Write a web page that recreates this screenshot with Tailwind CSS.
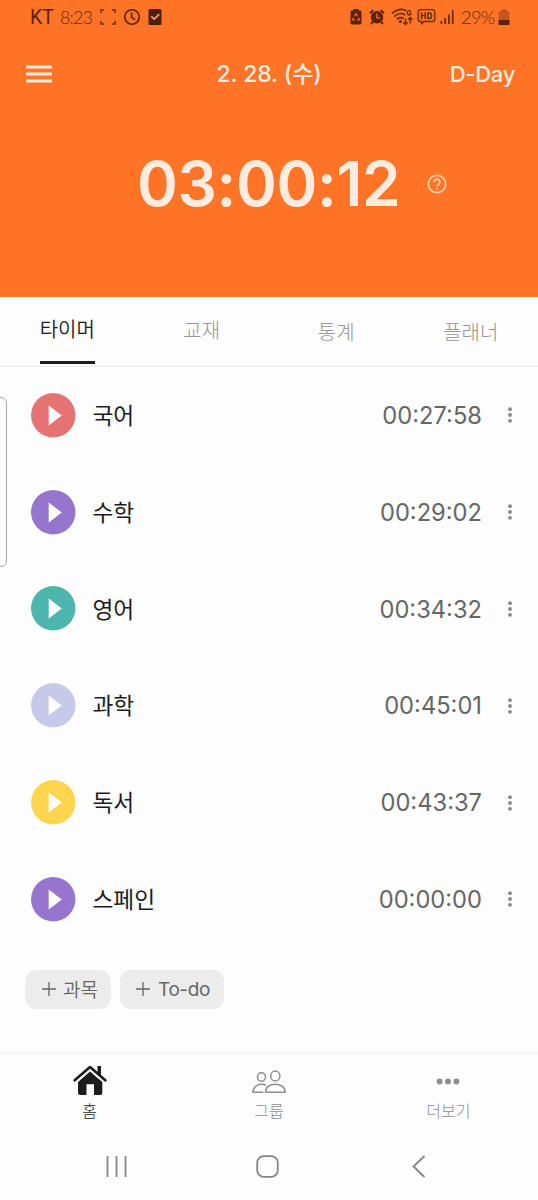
<!DOCTYPE html>
<html lang="ko">
<head>
    <meta charset="UTF-8">
    <meta name="viewport" content="width=device-width, initial-scale=1.0">
    <title>타이머</title>
    <script src="https://cdn.jsdelivr.net/npm/@tailwindcss/browser@4"></script>
</head>
<body class="bg-[#fdfdfd] font-['Inter','Noto_Sans_CJK_KR',sans-serif]">
    <div class="relative flex flex-col w-[538px] h-[1200px] overflow-hidden">

        <!-- Header -->
        <header class="h-[297px] shrink-0 bg-[#ff7426] text-[#ffece0]">
            <!-- Status bar -->
            <div class="flex items-center h-[34px] pl-[30px] pr-[28px] text-[#6b2a0a]">
                <span class="w-[30px] pt-[2px] text-[19.5px] leading-none font-['Roboto',sans-serif] text-[#5a230a] whitespace-nowrap">KT</span>
                <span class="w-[40px] text-[18px] leading-none font-light font-['Lato',sans-serif] whitespace-nowrap tracking-[-0.9px]">8:23</span>
                <svg class="w-4 h-4" viewBox="0 0 16 16" fill="none" stroke="currentColor" stroke-width="1.4">
                    <path d="M1 4V1h3M12 1h3v3M15 12v3h-3M4 15H1v-3"/>
                </svg>
                <svg class="ml-[7px] w-[18px] h-[18px]" viewBox="0 0 18 18" fill="none" stroke="#5a230a" stroke-width="1.6">
                    <circle cx="9" cy="9" r="7.3"/>
                    <path d="M8.6 4.5v4.8l3.6 2.3"/>
                </svg>
                <svg class="ml-[6px] w-[16px] h-[18px]" viewBox="0 0 16 18">
                    <rect x="1.5" y="1" width="13" height="16" rx="1.5" fill="#4d1f08"/>
                    <path d="M4.3 8.2l2.8 2.9 5.2-5" fill="none" stroke="#ffa469" stroke-width="1.6"/>
                </svg>

                <svg class="ml-auto w-[12px] h-[18px]" viewBox="0 0 12 18">
                    <path d="M3.5 1h5v1.6H10a1.5 1.5 0 0 1 1.5 1.5V15a1.5 1.5 0 0 1-1.5 1.5H2A1.5 1.5 0 0 1 .5 15V4.1a1.5 1.5 0 0 1 1.5-1.5h1.5z" fill="#5a230a"/>
                    <path d="M4.4 8.3L6 5.8l1.6 2.5M8.6 9.7l.9 2.3H7M5 12H2.6l.9-2.3" fill="none" stroke="#ff7426" stroke-width="1.2"/>
                </svg>
                <svg class="ml-[7px] w-[16px] h-[18px]" viewBox="0 0 16 18" fill="none" stroke="#5a230a">
                    <circle cx="8" cy="9.3" r="6.2" fill="#5a230a" stroke="none"/>
                    <path d="M1 5.2l3.3-2.9M15 5.2l-3.3-2.9M3.8 14l-1.8 2M12.2 14l1.8 2" stroke-width="2"/>
                    <path d="M8 5.5v4.3h3.2" stroke="#ff7426" stroke-width="1.3"/>
                </svg>
                <svg class="ml-[6px] w-[23px] h-[20px]" viewBox="0 0 23 20" fill="none" stroke="currentColor" stroke-width="1.7">
                    <path d="M.8 6.7C5.5 1.8 11.500 1.5 15.500 4"/>
                    <path d="M3.3 9.5c3.2-3.3 7.7-3.5 10.9-1.5"/>
                    <path d="M5.9 12.3c2-2 4.7-2.1 6.7-.7"/>
                    <circle cx="9.3" cy="14.6" r="1.5" fill="currentColor" stroke="none"/>
                    <path d="M20 4.6c-1-1.5-3.7-1.2-3.7 1.4 0 2.5 3.4 2.7 3.7.3h-1.6" stroke-width="1.3"/>
                    <path d="M14.5 11.5v6M12.3 15.3l2.2 2.3 2.2-2.3M19.3 16.5v-6M17.1 12.8l2.2-2.3 2.2 2.3" stroke-width="1.4"/>
                </svg>
                <svg class="ml-[3px] w-[19px] h-[18px]" viewBox="0 0 19 18" fill="none" stroke="currentColor">
                    <path d="M3.5 1.7h12a2.3 2.3 0 0 1 2.3 2.3v7.2a2.3 2.3 0 0 1-2.3 2.3H6.8l-2 2.3-.4-2.3h-.9a2.3 2.3 0 0 1-2.3-2.3V4a2.3 2.3 0 0 1 2.3-2.3z" stroke-width="1.3"/>
                    <path d="M4.5 4.2v7M8.3 4.2v7M4.5 7.6h3.8M11 4.9v5.6h1.1a2.5 2.8 0 0 0 0-5.6z" stroke-width="1.5"/>
                </svg>
                <svg class="ml-[4px] w-[15px] h-[18px]" viewBox="0 0 15 18" fill="currentColor">
                    <rect x=".5" y="13" width="1.7" height="3"/>
                    <rect x="4.3" y="10" width="1.7" height="6"/>
                    <rect x="8.1" y="6.5" width="1.7" height="9.5"/>
                    <rect x="11.9" y="2" width="1.7" height="14"/>
                </svg>
                <span class="ml-[6px] w-[37px] text-[18.5px] leading-none font-light font-['Lato',sans-serif] whitespace-nowrap tracking-[-0.8px]">29%</span>
                <svg class="w-[12px] h-[18px]" viewBox="0 0 12 18">
                    <path d="M3.5 1h5v2H10a1.5 1.5 0 0 1 1.5 1.5V13H.5V4.5A1.5 1.5 0 0 1 2 3h1.5z" fill="#c4571a"/>
                    <path d="M.5 12h11v3.5a1.5 1.5 0 0 1-1.5 1.5H2a1.5 1.5 0 0 1-1.5-1.5z" fill="#5a230a"/>
                </svg>
            </div>

            <!-- Title bar -->
            <div class="grid grid-cols-3 items-center h-[80px] px-[23px]">
                <svg class="ml-[3px] w-[26px] h-[18px]" viewBox="0 0 26 18" fill="currentColor">
                    <rect y=".5" width="26" height="3"/>
                    <rect y="7.5" width="26" height="3"/>
                    <rect y="14.5" width="26" height="3"/>
                </svg>
                <h1 class="text-center text-[23px] leading-none font-[450] whitespace-nowrap tracking-[-0.1px]">2. 28. (수)</h1>
                <span class="text-right text-[22px] leading-none font-[450] tracking-[-0.3px]">D-Day</span>
            </div>

            <!-- Total time -->
            <div class="flex items-center h-[140px] pl-[137px]">
                <span class="w-[289.5px] text-[62px] leading-none font-semibold whitespace-nowrap tracking-[-0.4px]">03:00:12</span>
                <svg class="w-5 h-5" viewBox="0 0 20 20" fill="none" stroke="#ffd0a6" stroke-width="1.7">
                    <circle cx="10" cy="10" r="8.7"/>
                    <path d="M7.2 8a2.8 2.8 0 1 1 4.5 2.2c-1 .7-1.6 1.1-1.6 2.1M10.1 13.7v1.6" stroke-width="1.9"/>
                </svg>
            </div>
        </header>

        <!-- Tabs -->
        <nav class="grid grid-cols-4 h-[70px] shrink-0 border-b border-[#ececec] text-[20px] leading-none text-[#959595] font-light">
            <a class="relative flex justify-center pt-[23px] font-[350] text-[#1c1c1e]">타이머
                <span class="absolute bottom-[2px] left-[40px] w-[55px] h-[3px] bg-[#1c1c1e]"></span>
            </a>
            <a class="flex justify-center pt-[24px]">교재</a>
            <a class="flex justify-center pt-[26px]">통계</a>
            <a class="flex justify-center pt-[26px]">플래너</a>
        </nav>

        <!-- Subjects -->
        <ul id="subjects" class="shrink-0"></ul>

        <!-- Add buttons -->
        <div class="flex gap-[9px] mt-[22px] pl-[25px] text-[#666] text-[19px] leading-none">
            <button class="flex items-center h-[39px] w-[86px] pl-[17px] gap-[7px] rounded-[11px] bg-[#ececec]">
                <svg class="w-[14px] h-[14px]" viewBox="0 0 14 14" stroke="currentColor" stroke-width="1.3"><path d="M7 0v14M0 7h14"/></svg>
                <span class="pt-[2px] whitespace-nowrap font-[350]">과목</span>
            </button>
            <button class="flex items-center h-[39px] w-[104px] pl-[16px] gap-[8px] rounded-[11px] bg-[#ececec]">
                <svg class="w-[14px] h-[14px]" viewBox="0 0 14 14" stroke="currentColor" stroke-width="1.3"><path d="M7 0v14M0 7h14"/></svg>
                <span class="whitespace-nowrap tracking-[-0.4px]">To-do</span>
            </button>
        </div>

        <!-- Bottom menu -->
        <nav class="grid grid-cols-3 h-[79px] shrink-0 mt-auto border-t-2 border-[#f5f5f5] text-[16px] leading-none font-light text-[#8e8e8e]">
            <a class="flex flex-col items-center pt-[10px] text-[#1c1c1e]">
                <svg class="w-[34px] h-[32px]" viewBox="0 0 34 32">
                    <path d="M17 7.5L29.3 18v10.5a2.5 2.5 0 0 1-2.5 2.5H21V20.3h-7.5V31H7.5A2.5 2.5 0 0 1 5 28.5V18z" fill="#1c1c1e"/>
                    <path d="M1.7 16.3L17 3l15.3 13.3" fill="none" stroke="#fdfdfd" stroke-width="5"/>
                    <path d="M1.7 16.3L17 3l15.3 13.3" fill="none" stroke="#1c1c1e" stroke-width="2.6" stroke-linecap="round" stroke-linejoin="round"/>
                    <path d="M24.5 2h3.5v10l-3.5-3z" fill="#1c1c1e"/>
                </svg>
                <span class="mt-[7px]">홈</span>
            </a>
            <a class="flex flex-col items-center pt-[10px]">
                <svg class="w-[34px] h-[32px]" viewBox="0 0 34 32" fill="none" stroke="#8e8e8e" stroke-width="1.5" stroke-linejoin="round">
                    <ellipse cx="9.5" cy="13" rx="4" ry="4.3"/>
                    <ellipse cx="23.3" cy="12" rx="4.6" ry="5"/>
                    <path d="M14 21.3C8 18.5 1 22 .9 28.300h10.500"/>
                    <path d="M13.5 28.3c0-10.8 19.7-10.8 19.7 0z"/>
                </svg>
                <span class="mt-[7px]">그룹</span>
            </a>
            <a class="flex flex-col items-center pt-[10px]">
                <svg class="w-[34px] h-[32px]" viewBox="0 0 34 32" fill="#8e8e8e">
                    <circle cx="8.6" cy="17.5" r="2.9"/>
                    <circle cx="17" cy="17.5" r="2.9"/>
                    <circle cx="25.4" cy="17.5" r="2.9"/>
                </svg>
                <span class="mt-[7px]">더보기</span>
            </a>
        </nav>

        <!-- System navigation -->
        <div class="flex h-[69px] shrink-0 pl-[106px] pt-[24px]">
            <svg class="w-[22px] h-[23px]" viewBox="0 0 22 23" stroke="#858585" stroke-width="1.8"><path d="M1.5 1v21M10.5 1v21M19.5 1v21"/></svg>
            <svg class="ml-[127.5px] w-[23px] h-[23px]" viewBox="0 0 23 23" fill="none" stroke="#858585" stroke-width="1.8"><rect x="1.2" y="1.2" width="20.6" height="20.6" rx="6.5"/></svg>
            <svg class="ml-[133px] w-[14px] h-[23px]" viewBox="0 0 14 23" fill="none" stroke="#858585" stroke-width="1.8"><path d="M12.5 1L1.5 11.5l11 10.5"/></svg>
        </div>

        <!-- Edge panel handle -->
        <div class="absolute left-[-10px] top-[397px] w-[17px] h-[170px] rounded-[6px] border border-[#a8a8a8]"></div>
    </div>

    <script>
        const subjects = [
            { name: '국어', time: '00:27:58', color: '#e57373' },
            { name: '수학', time: '00:29:02', color: '#9575cd' },
            { name: '영어', time: '00:34:32', color: '#4db6ac' },
            { name: '과학', time: '00:45:01', color: '#c5cae9' },
            { name: '독서', time: '00:43:37', color: '#ffd54f' },
            { name: '스페인', time: '00:00:00', color: '#9575cd' }
        ];

        document.getElementById('subjects').innerHTML = subjects.map(subject => `
            <li class="flex items-center h-[96.8px] pl-[31px] pr-[25px]">
                <svg class="w-[45px] h-[45px]" viewBox="0 0 45 45">
                    <circle cx="22.25" cy="22.25" r="22.2" fill="${subject.color}"/>
                    <path d="M17.7 12.5v20l13.1-10z" fill="#fff"/>
                </svg>
                <span class="ml-[16.5px] pt-[2px] text-[22.7px] leading-none text-[#1c1c1e] whitespace-nowrap">${subject.name}</span>
                <span class="ml-auto pt-px text-[23.7px] leading-none text-[#666] whitespace-nowrap">${subject.time}</span>
                <svg class="ml-[25px] w-[6px] h-[16px]" viewBox="0 0 6 16" fill="#888">
                    <circle cx="3" cy="2.2" r="1.9"/>
                    <circle cx="3" cy="8" r="1.9"/>
                    <circle cx="3" cy="13.8" r="1.9"/>
                </svg>
            </li>
        `).join('');
    </script>
</body>
</html>
